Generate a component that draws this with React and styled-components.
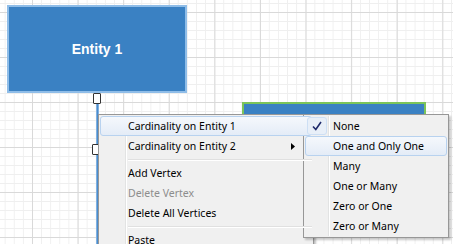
import styled, { createGlobalStyle } from "styled-components";

const GlobalStyle = createGlobalStyle`
  html, body {
    margin: 0;
    padding: 0;
    background: #ffffff;
  }
`;

const Canvas = styled.div`
  position: relative;
  width: 453px;
  height: 244px;
  overflow: hidden;
  background-color: #ffffff;
  background-image:
    linear-gradient(to right, #d9d9d9 1px, transparent 1px),
    linear-gradient(to bottom, #d9d9d9 1px, transparent 1px),
    linear-gradient(to right, #efefef 1px, transparent 1px),
    linear-gradient(to bottom, #efefef 1px, transparent 1px);
  background-size: 45.6px 45px, 45.6px 45px, 9.12px 9px, 9.12px 9px;
  background-position: 32px 12px;
  font-family: "Noto Sans", "Open Sans", sans-serif;
`;

const Entity = styled.div`
  position: absolute;
  left: ${(p) => p.x}px;
  top: ${(p) => p.y}px;
  width: ${(p) => p.w}px;
  height: ${(p) => p.h}px;
  box-sizing: border-box;
  background: #3a81c3;
  border: 2px solid ${(p) => (p.selected ? "#7cc45a" : "#8fbde8")};
  display: flex;
  align-items: center;
  justify-content: center;
  color: #ffffff;
  font-family: "Liberation Sans", Arial, sans-serif;
  font-weight: bold;
  font-size: 14px;
`;

const Connector = styled.div`
  position: absolute;
  left: 96px;
  top: 103px;
  width: 3px;
  height: 150px;
  background: linear-gradient(to right, #9cc3ea, #4a8ccc, #9cc3ea);
`;

const Handle = styled.div`
  position: absolute;
  left: ${(p) => p.x}px;
  top: ${(p) => p.y}px;
  width: 6px;
  height: 9px;
  background: #ffffff;
  border: 1px solid #333333;
  border-radius: 1px;
`;

const Menu = styled.div`
  position: absolute;
  left: ${(p) => p.x}px;
  top: ${(p) => p.y}px;
  width: ${(p) => p.w}px;
  box-sizing: border-box;
  padding: 1px;
  background: #f0f0f0;
  border: 1px solid #979797;
  box-shadow: 2px 2px 2px rgba(0, 0, 0, 0.22);
  display: flex;
  flex-direction: column;
  &::before {
    content: "";
    position: absolute;
    top: 1px;
    bottom: 1px;
    left: ${(p) => p.gutter}px;
    width: 1px;
    background: #e2e3e3;
    box-shadow: 1px 0 0 #ffffff;
  }
`;

const Item = styled.div`
  position: relative;
  z-index: 1;
  height: 20px;
  box-sizing: border-box;
  display: flex;
  align-items: center;
  padding-left: ${(p) => p.indent}px;
  font-size: 10.5px;
  color: ${(p) => (p.disabled ? "#8d8d8d" : "#000000")};
  border: 1px solid ${(p) => (p.active ? "#b8d2ef" : "transparent")};
  border-radius: 3px;
  background: ${(p) =>
    p.active ? "linear-gradient(to bottom, #f5f8fc, #e4ecf7)" : "transparent"};
`;

const Separator = styled.div`
  position: relative;
  z-index: 1;
  height: 7px;
  margin-left: ${(p) => p.indent}px;
  display: flex;
  align-items: center;
  &::after {
    content: "";
    flex: 1;
    height: 1px;
    background: #e0e0e0;
    box-shadow: 0 1px 0 #ffffff;
  }
`;

const Arrow = styled.svg`
  position: absolute;
  right: ${(p) => p.right}px;
  top: 6px;
`;

const CheckBox = styled.span`
  position: absolute;
  left: 1px;
  top: 0;
  width: 20px;
  height: 18px;
  box-sizing: border-box;
  border: 1px solid #cddff4;
  border-radius: 3px;
  background: #e8eff8;
  display: flex;
  align-items: center;
  justify-content: center;
`;

const mainItems = [
  { label: "Cardinality on Entity 1", active: true },
  { label: "Cardinality on Entity 2", sub: true },
  { sep: true },
  { label: "Add Vertex" },
  { label: "Delete Vertex", disabled: true },
  { label: "Delete All Vertices" },
  { sep: true },
  { label: "Paste" },
];

const subItems = [
  { label: "None", checked: true },
  { label: "One and Only One", active: true },
  { label: "Many" },
  { label: "One or Many" },
  { label: "Zero or One" },
  { label: "Zero or Many" },
];

export default function App() {
  return (
    <>
      <GlobalStyle />
      <Canvas>
        <Entity x={7} y={5} w={180} h={88}>Entity 1</Entity>
        <Entity x={242} y={102} w={184} h={80} selected />
        <Connector />
        <Handle x={93} y={93} />
        <Handle x={92} y={144} />

        <Menu x={98} y={114} w={216} gutter={26}>
          {mainItems.map((it, i) =>
            it.sep ? (
              <Separator key={i} indent={28} />
            ) : (
              <Item key={i} indent={27} active={it.active} disabled={it.disabled}>
                {it.label}
                {it.sub && (
                  <Arrow right={16} width="4" height="7" viewBox="0 0 4 7">
                    <path d="M0 0 L4 3.5 L0 7 Z" fill="#000" />
                  </Arrow>
                )}
              </Item>
            )
          )}
        </Menu>

        <Menu x={303} y={114} w={146} gutter={24}>
          {subItems.map((it, i) => (
            <Item key={i} indent={27} active={it.active}>
              {it.checked && (
                <CheckBox>
                  <svg width="10" height="10" viewBox="0 0 10 10">
                    <path
                      d="M1 5.5 L3.8 8.5 L9 1"
                      fill="none"
                      stroke="#1f2a6b"
                      strokeWidth="1.6"
                    />
                  </svg>
                </CheckBox>
              )}
              {it.label}
            </Item>
          ))}
        </Menu>
      </Canvas>
    </>
  );
}
